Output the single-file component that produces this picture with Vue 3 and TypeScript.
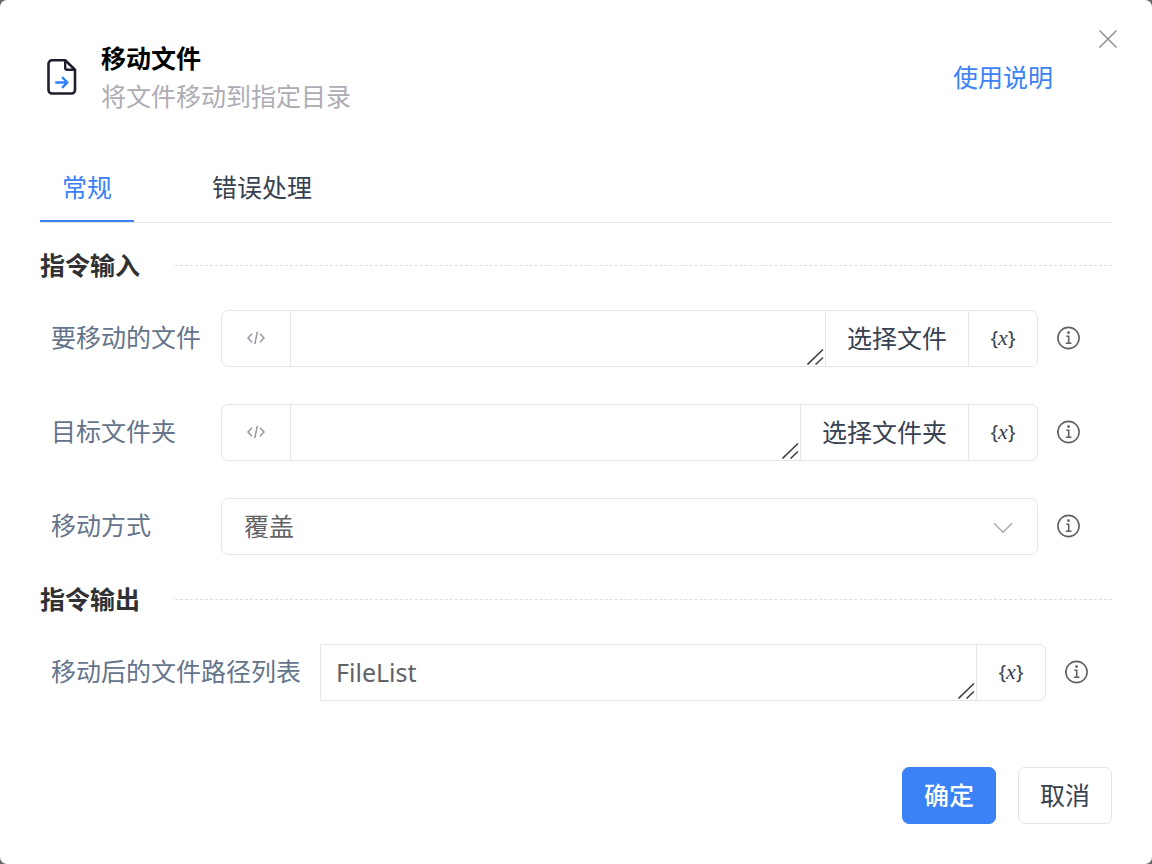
<script setup lang="ts">
import { ref } from 'vue'

interface Tab {
  id: string
  label: string
}

interface PathField {
  id: string
  label: string
  action: string
}

const tabs: Tab[] = [
  { id: 'general', label: '常规' },
  { id: 'errors', label: '错误处理' },
]

const pathFields: PathField[] = [
  { id: 'source', label: '要移动的文件', action: '选择文件' },
  { id: 'target', label: '目标文件夹', action: '选择文件夹' },
]

const activeTab = ref('general')
const paths = ref<Record<string, string>>({ source: '', target: '' })
const mode = ref('overwrite')
const outputName = ref('FileList')
</script>

<template>
  <main class="dialog" role="dialog" aria-labelledby="dialog-title">
    <button class="close" type="button" aria-label="关闭">
      <svg width="20" height="20" viewBox="0 0 20 20" fill="none" stroke="currentColor" stroke-width="1.6">
        <path d="M1.5 1.5 18.5 18.5M18.5 1.5 1.5 18.5" />
      </svg>
    </button>

    <header class="header">
      <svg class="file-icon" width="30" height="36" viewBox="0 0 30 36" fill="none" stroke-linejoin="round">
        <path d="M5 1.3H18.2L28 10.8V31A3.5 3.5 0 0 1 24.5 34.5H5A3.5 3.5 0 0 1 1.5 31V4.8A3.5 3.5 0 0 1 5 1.3Z" stroke="#211c2e" stroke-width="2.6" />
        <path d="M18.2 1.5V8.8A2 2 0 0 0 20.2 10.8H28" stroke="#211c2e" stroke-width="2.4" />
        <path d="M8.3 23.5H20M15 18.1 20.4 23.5 15 28.9" stroke="#2f80ff" stroke-width="2.4" />
      </svg>
      <div class="heading">
        <h1 id="dialog-title">移动文件</h1>
        <p>将文件移动到指定目录</p>
      </div>
      <a class="help" href="#">使用说明</a>
    </header>

    <nav class="tabs" role="tablist">
      <button
        v-for="tab in tabs"
        :key="tab.id"
        class="tab"
        :class="{ active: tab.id === activeTab }"
        type="button"
        role="tab"
        :aria-selected="tab.id === activeTab"
        @click="activeTab = tab.id"
      >{{ tab.label }}</button>
    </nav>

    <section class="group">
      <h2>指令输入</h2>
      <div class="rows">
        <div v-for="field in pathFields" :key="field.id" class="row">
          <label :for="field.id">{{ field.label }}</label>
          <div class="control">
            <button class="cell square code" type="button" aria-label="表达式">
              <svg width="18" height="14" viewBox="0 0 18 14" fill="none" stroke="currentColor" stroke-width="1.5">
                <path d="M5 2.8 1 7 5 11.2M13 2.8 17 7 13 11.2M10.3 .8 7.8 13.2" />
              </svg>
            </button>
            <div class="area">
              <textarea :id="field.id" v-model="paths[field.id]" rows="1"></textarea>
              <svg class="grip" width="17" height="16" viewBox="0 0 17 16" stroke="#444" stroke-width="1.6">
                <path d="M.5 15.5 16 .5M8.5 15.5 16 8.5" />
              </svg>
            </div>
            <button class="cell action" type="button">{{ field.action }}</button>
            <button class="cell square variable" type="button" aria-label="变量">{<i>x</i>}</button>
          </div>
          <button class="info" type="button" aria-label="说明">
            <svg width="24" height="24" viewBox="0 0 24 24" fill="none" stroke="currentColor" stroke-width="1.6">
              <circle cx="12.5" cy="12" r="10.6" />
              <path d="M10.3 10.2H12.7V17M9.8 17.3H15.5" />
              <circle cx="12.5" cy="6.6" r="1.4" fill="currentColor" stroke="none" />
            </svg>
          </button>
        </div>

        <div class="row">
          <label for="mode">移动方式</label>
          <div class="control">
            <select id="mode" v-model="mode">
              <option value="overwrite">覆盖</option>
            </select>
            <svg class="chevron" width="20" height="12" viewBox="0 0 20 12" fill="none" stroke="#a8abb2" stroke-width="1.5">
              <path d="M1 1.2 10 10.2 19 1.2" />
            </svg>
          </div>
          <button class="info" type="button" aria-label="说明">
            <svg width="24" height="24" viewBox="0 0 24 24" fill="none" stroke="currentColor" stroke-width="1.6">
              <circle cx="12.5" cy="12" r="10.6" />
              <path d="M10.3 10.2H12.7V17M9.8 17.3H15.5" />
              <circle cx="12.5" cy="6.6" r="1.4" fill="currentColor" stroke="none" />
            </svg>
          </button>
        </div>
      </div>
    </section>

    <section class="group">
      <h2>指令输出</h2>
      <div class="rows output">
        <div class="row">
          <label for="output">移动后的文件路径列表</label>
          <div class="control flush">
            <div class="area">
              <textarea id="output" v-model="outputName" rows="1" spellcheck="false"></textarea>
              <svg class="grip" width="17" height="16" viewBox="0 0 17 16" stroke="#444" stroke-width="1.6">
                <path d="M.5 15.5 16 .5M8.5 15.5 16 8.5" />
              </svg>
            </div>
            <button class="cell square variable" type="button" aria-label="变量">{<i>x</i>}</button>
          </div>
          <button class="info" type="button" aria-label="说明">
            <svg width="24" height="24" viewBox="0 0 24 24" fill="none" stroke="currentColor" stroke-width="1.6">
              <circle cx="12.5" cy="12" r="10.6" />
              <path d="M10.3 10.2H12.7V17M9.8 17.3H15.5" />
              <circle cx="12.5" cy="6.6" r="1.4" fill="currentColor" stroke="none" />
            </svg>
          </button>
        </div>
      </div>
    </section>

    <footer class="footer">
      <button class="btn primary" type="button">确定</button>
      <button class="btn" type="button">取消</button>
    </footer>
  </main>
</template>

<style>
body {
  margin: 0;
  background: #6a6a6c;
}
</style>

<style scoped>
.dialog {
  position: relative;
  box-sizing: border-box;
  min-height: 100vh;
  padding: 39px 40px 40px;
  border-radius: 7px;
  background: #fff;
  color: #374151;
  font-family: "Noto Sans", "Noto Sans CJK SC", sans-serif;
  font-size: 25px;
  line-height: 38px;
}

button,
textarea,
select {
  box-sizing: border-box;
  margin: 0;
  padding: 0;
  border: 0;
  background: none;
  color: inherit;
  font: inherit;
}

button {
  cursor: pointer;
}

svg {
  display: block;
}

.close {
  position: absolute;
  top: 29px;
  right: 34px;
  color: #909399;
}

.header {
  display: flex;
  align-items: center;
  padding: 0 59px 0 7px;
}

.heading {
  flex: 1;
  margin-left: 24px;
}

h1,
h2,
p {
  margin: 0;
  font-size: 25px;
}

h1 {
  color: #000;
  font-weight: 700;
}

p {
  color: #aeacb4;
}

.help {
  color: #3b82f6;
  text-decoration: none;
}

.tabs {
  display: flex;
  gap: 56px;
  margin-top: 39px;
  border-bottom: 1px solid #e4e4e7;
}

.tab {
  height: 68px;
  padding: 0 22px;
  border-bottom: 2px solid transparent;
}

.tab.active {
  border-color: #3b82f6;
  color: #3b82f6;
}

.group {
  margin-top: 23px;
}

.group + .group {
  margin-top: 25px;
}

h2 {
  display: flex;
  align-items: center;
  gap: 35px;
  color: #303133;
  font-weight: 700;
}

h2::after {
  flex: 1;
  border-top: 1px dashed #dcdfe6;
  content: "";
}

.rows {
  display: flex;
  flex-direction: column;
  gap: 37px;
  margin-top: 26px;
  padding: 0 32px 0 11px;
}

.rows.output {
  padding-right: 24px;
}

.row {
  display: flex;
  align-items: center;
}

label {
  box-sizing: border-box;
  min-width: 170px;
  padding: 0 19px 3px 0;
  color: #64748b;
  white-space: nowrap;
}

.control {
  position: relative;
  box-sizing: border-box;
  display: flex;
  flex: 1;
  min-width: 0;
  height: 57px;
  border: 1px solid #e4e5ea;
  border-radius: 7px;
}

.control.flush {
  border-top-left-radius: 0;
  border-bottom-left-radius: 0;
}

.area {
  position: relative;
  display: flex;
  flex: 1;
  min-width: 0;
}

textarea {
  width: 100%;
  height: 100%;
  padding: 8px 15px;
  color: #606266;
  resize: none;
  overflow: hidden;
}

.grip {
  position: absolute;
  right: 1px;
  bottom: 1px;
  pointer-events: none;
}

.cell {
  display: flex;
  align-items: center;
  justify-content: center;
  padding-bottom: 2px;
  border-left: 1px solid #e4e5ea;
  white-space: nowrap;
}

.square {
  width: 69px;
}

.action {
  padding-right: 21px;
  padding-left: 21px;
}

.code {
  border-right: 1px solid #e4e5ea;
  border-left: 0;
  color: #9498a3;
}

.variable {
  font-size: 20px;
}

.variable i {
  font-family: "Liberation Serif", serif;
  font-size: 22px;
}

select {
  width: 100%;
  padding: 0 22px 2px;
  color: #606266;
  appearance: none;
}

.chevron {
  position: absolute;
  top: 23px;
  right: 24px;
  pointer-events: none;
}

.info {
  margin-left: 18px;
  padding-bottom: 2px;
  color: #606266;
}

.footer {
  display: flex;
  justify-content: flex-end;
  gap: 22px;
  margin-top: 66px;
}

.btn {
  height: 57px;
  padding: 0 21px 2px;
  border: 1px solid #e4e4e7;
  border-radius: 7px;
}

.btn.primary {
  border-color: #3b82f6;
  background: #3b82f6;
  color: #fff;
  font-weight: 500;
}
</style>
